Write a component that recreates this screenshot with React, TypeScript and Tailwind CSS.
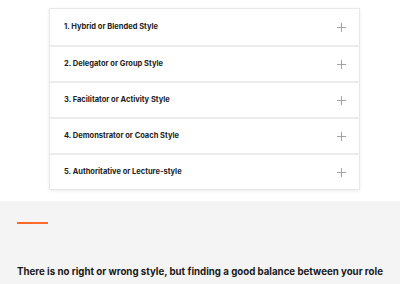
const items = [
  "1. Hybrid or Blended Style",
  "2. Delegator or Group Style",
  "3. Facilitator or Activity Style",
  "4. Demonstrator or Coach Style",
  "5. Authoritative or Lecture-style",
];

function PlusIcon() {
  return (
    <svg className="w-[9px] h-[9px]" viewBox="0 0 9 9" fill="none" stroke="#a3a3a3" strokeWidth={1}>
      <path d="M4.5 0v9M0 4.5h9" />
    </svg>
  );
}

export default function App() {
  return (
    <div className="w-[400px] h-[284px] overflow-hidden bg-white font-['Inter',sans-serif]">
      <div className="pt-2 pb-[11px] pl-[49px] pr-[40px]">
        <div className="border border-[#e8e8e8] bg-white shadow-[0_1px_3px_rgba(0,0,0,0.08)]">
          {items.map((item, i) => (
            <div
              key={item}
              className={`flex items-center justify-between h-[36px] pl-[14px] pr-[13px] ${i > 0 ? "border-t-2 border-[#ececec]" : ""}`}
            >
              <span className="text-[7.5px] font-bold text-[#222]">{item}</span>
              <PlusIcon />
            </div>
          ))}
        </div>
      </div>
      <div className="bg-[#f4f4f4] pl-[17px] pr-[10px] pt-[21px] h-[100px]">
        <div className="w-[31px] h-[2px] bg-[#ff6a2b]" />
        <p className="mt-[38px] text-[9.7px] font-bold leading-[20px] text-[#1a1a1a]">
          There is no right or wrong style, but finding a good balance between your role as content expert and as learner or facilitator is crucial. When preparing your
        </p>
      </div>
    </div>
  );
}
